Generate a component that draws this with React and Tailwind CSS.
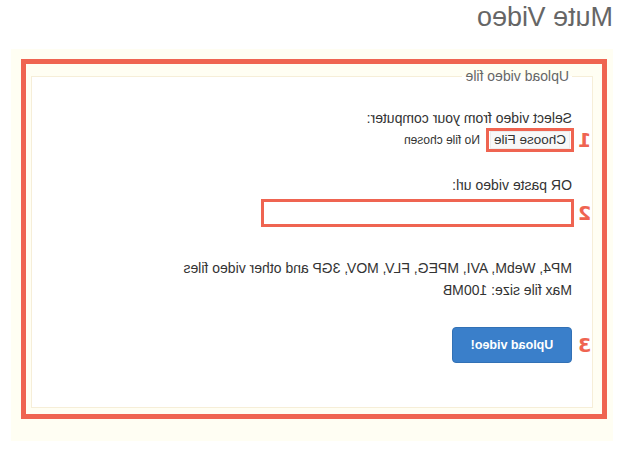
import React from 'react';

// The reference is a mirrored screenshot, so the page is laid out normally and flipped.
const RED = 'text-[#ef6451]';

const Marker = ({ n }) => (
  <span className={`absolute right-full top-1/2 -translate-y-1/2 mr-[6px] font-['DejaVu_Sans',sans-serif] text-[19px] leading-none font-bold ${RED}`}>
    {n}
  </span>
);

const App = () => {
  return (
    <div className="w-[634px] h-[449px] overflow-hidden bg-white -scale-x-100 font-['Liberation_Sans',Arial,sans-serif] text-[#333]">
      <h1 className="ml-[21px] pt-[2px] text-[27px] leading-[30px] font-normal text-[#666]">Mute Video</h1>

      <div className="ml-[21px] mt-[17px] w-[602px] h-[392px] bg-[#fffef3] pt-[10px] pl-[6px]">
        <div className="w-[586px] h-[360px] border-[5px] border-[#ef6451] pt-[2px] pl-[9px]">
          <fieldset className="w-[562px] h-[342px] border border-[#f6eed8] bg-white pl-[20px]">
            <legend className="px-[3px] text-[14px] leading-[20px] text-[#666]">Upload video file</legend>

            <p className="mt-[22px] text-[14px] leading-[20px]">Select video from your computer:</p>
            <div className="relative flex items-center h-[24px]">
              <Marker n="1" />
              <span className="-ml-[2px] w-[88px] h-[24px] border-[3px] border-[#ef6451] flex items-center justify-center">
                <span className="w-[80px] text-center text-[13.5px] leading-[16px] bg-[#f8f8f8] border border-[#ececec]">Choose File</span>
              </span>
              <span className="ml-[6px] text-[12px] leading-[16px]">No file chosen</span>
            </div>

            <p className="mt-[23px] text-[14px] leading-[20px]">OR paste video url:</p>
            <div className="relative mt-[4px] h-[28px]">
              <Marker n="2" />
              <div className="-ml-[2px] w-[313px] h-[28px] border-[3px] border-[#ef6451] bg-white" />
            </div>

            <div className="mt-[30px] text-[14px] leading-[22px]">
              <p>MP4, WebM, AVI, MPEG, FLV, MOV, 3GP and other video files</p>
              <p>Max file size: 100MB</p>
            </div>

            <div className="relative mt-[26px] w-[120px] h-[36px]">
              <Marker n="3" />
              <button className="w-[120px] h-[36px] rounded-[4px] bg-[#3a7fca] border border-[#3271b5] text-white text-[12.5px] font-bold">
                Upload video!
              </button>
            </div>
          </fieldset>
        </div>
      </div>
    </div>
  );
};

export default App;
